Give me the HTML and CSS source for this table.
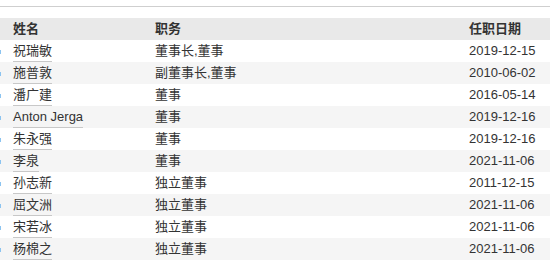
FILE: index.html
```html
<!DOCTYPE html>
<html lang="zh-CN">
<head>
<meta charset="utf-8">
<link rel="stylesheet" href="styles.css">
</head>
<body>
<div class="topline"></div>
<table class="mgr">
  <thead>
    <tr><th class="c-name">姓名</th><th class="c-pos">职务</th><th class="c-date">任职日期</th></tr>
  </thead>
  <tbody>
    <tr><td class="c-name"><i class="mark"></i><a>祝瑞敏</a></td><td class="c-pos">董事长,董事</td><td class="c-date">2019-12-15</td></tr>
    <tr><td class="c-name"><i class="mark"></i><a>施普敦</a></td><td class="c-pos">副董事长,董事</td><td class="c-date">2010-06-02</td></tr>
    <tr><td class="c-name"><i class="mark"></i><a>潘广建</a></td><td class="c-pos">董事</td><td class="c-date">2016-05-14</td></tr>
    <tr><td class="c-name"><i class="mark"></i><a>Anton Jerga</a></td><td class="c-pos">董事</td><td class="c-date">2019-12-16</td></tr>
    <tr><td class="c-name"><i class="mark"></i><a>朱永强</a></td><td class="c-pos">董事</td><td class="c-date">2019-12-16</td></tr>
    <tr><td class="c-name"><i class="mark"></i><a>李泉</a></td><td class="c-pos">董事</td><td class="c-date">2021-11-06</td></tr>
    <tr><td class="c-name"><i class="mark"></i><a>孙志新</a></td><td class="c-pos">独立董事</td><td class="c-date">2011-12-15</td></tr>
    <tr><td class="c-name"><i class="mark"></i><a>屈文洲</a></td><td class="c-pos">独立董事</td><td class="c-date">2021-11-06</td></tr>
    <tr><td class="c-name"><i class="mark"></i><a>宋若冰</a></td><td class="c-pos">独立董事</td><td class="c-date">2021-11-06</td></tr>
    <tr><td class="c-name"><i class="mark"></i><a>杨棉之</a></td><td class="c-pos">独立董事</td><td class="c-date">2021-11-06</td></tr>
  </tbody>
</table>
</body>
</html>
```
FILE: styles.css
```css
html, body {
  margin: 0;
  padding: 0;
  background: #fff;
}
body {
  font-family: "Liberation Sans", "Noto Sans CJK SC", sans-serif;
  font-size: 13px;
  color: #333;
}
.topline {
  margin-top: 6px;
  height: 0;
  border-top: 1px solid #cfcfcf;
}
.mgr {
  margin-top: 11px;
  width: 550px;
  border-collapse: collapse;
  table-layout: fixed;
}
.mgr th, .mgr td {
  height: 22px;
  padding: 0;
  text-align: left;
  vertical-align: middle;
  white-space: nowrap;
  line-height: 22px;
}
.mgr thead tr {
  background: #e9e9e9;
}
.mgr th {
  font-weight: bold;
  color: #333;
}
.mgr tbody tr:nth-child(even) {
  background: #f5f5f5;
}
.mgr .c-name {
  width: 142px;
  position: relative;
  padding-left: 13px;
}
.mgr .c-pos {
  width: 314px;
}
.mark {
  position: absolute;
  left: 0;
  top: 10px;
  width: 1px;
  height: 4px;
  background: #8cc4f0;
}
.c-name a {
  color: #333;
  text-decoration: none;
  display: inline-block;
  line-height: 21px;
  border-bottom: 1px solid #c8c8c8;
  vertical-align: top;
}
```
